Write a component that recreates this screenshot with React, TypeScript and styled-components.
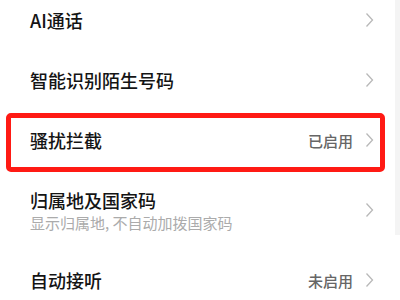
import React from "react";
import styled, { createGlobalStyle } from "styled-components";

const GlobalStyle = createGlobalStyle`
  html, body {
    margin: 0;
    padding: 0;
    background: #ffffff;
  }
  body {
    font-family: "Noto Sans CJK SC", "Noto Sans", sans-serif;
    width: 400px;
    height: 300px;
    overflow: hidden;
  }
`;

const Page = styled.div`
  position: relative;
  width: 400px;
  height: 300px;
  overflow: hidden;
  background: #ffffff;
`;

const List = styled.div`
  display: flex;
  flex-direction: column;
  margin-top: -10px;
`;

const Row = styled.div<{ $height: number }>`
  position: relative;
  height: ${(p) => p.$height}px;
  display: flex;
  align-items: center;
  padding: 0 26px 0 30px;
  box-sizing: border-box;
`;

const Highlight = styled.div`
  position: absolute;
  left: 6px;
  top: 3px;
  width: 379px;
  height: 59px;
  border: 5px solid #ff1a14;
  border-radius: 5px;
  box-sizing: border-box;
  pointer-events: none;
`;

const Texts = styled.div`
  flex: 1;
  display: flex;
  flex-direction: column;
  min-width: 0;
`;

const Title = styled.div`
  font-size: 18px;
  font-weight: 500;
  line-height: 24px;
  color: #141414;
  white-space: nowrap;
`;

const Subtitle = styled.div`
  font-size: 15px;
  line-height: 21px;
  color: #ababab;
  white-space: nowrap;
`;

const Value = styled.span`
  font-size: 15px;
  font-weight: 500;
  color: #666666;
  margin-right: 12px;
`;

const Chevron = styled.svg`
  width: 9px;
  height: 16px;
  flex-shrink: 0;
`;

const ScrollThumb = styled.div`
  position: absolute;
  right: 0;
  top: 0;
  width: 5px;
  height: 235px;
  background: #f4f4f4;
`;

type Item = {
  title: string;
  subtitle?: string;
  value?: string;
  height: number;
  highlight?: boolean;
};

const items: Item[] = [
  { title: "AI通话", height: 60 },
  { title: "智能识别陌生号码", height: 60 },
  { title: "骚扰拦截", value: "已启用", height: 60, highlight: true },
  { title: "归属地及国家码", subtitle: "显示归属地, 不自动加拨国家码", height: 80 },
  { title: "自动接听", value: "未启用", height: 60 },
];

function Arrow() {
  return (
    <Chevron viewBox="0 0 9 16">
      <path d="M1.5 1.5 L7.5 8 L1.5 14.5" fill="none" stroke="#b8b8b8" strokeWidth="1.3" />
    </Chevron>
  );
}

export default function App() {
  return (
    <Page>
      <GlobalStyle />
      <List>
        {items.map((item) => (
          <Row key={item.title} $height={item.height}>
            <Texts>
              <Title>{item.title}</Title>
              {item.subtitle && <Subtitle>{item.subtitle}</Subtitle>}
            </Texts>
            {item.value && <Value>{item.value}</Value>}
            <Arrow />
            {item.highlight && <Highlight />}
          </Row>
        ))}
      </List>
      <ScrollThumb />
    </Page>
  );
}
